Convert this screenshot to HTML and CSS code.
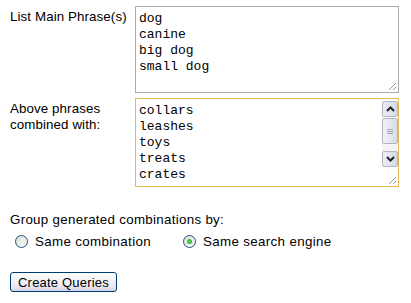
FILE: index.html
```html
<!DOCTYPE html>
<html lang="en">
<head>
    <meta charset="UTF-8">
    <title>Create Queries</title>
    <link rel="stylesheet" href="styles.css">
</head>
<body>
    <form class="query-form">
        <div class="phrase-grid">
            <label class="field-label">List Main Phrase(s)</label>
            <div class="text-box main-box">
                <div class="text-lines">
                    <div>dog</div>
                    <div>canine</div>
                    <div>big dog</div>
                    <div>small dog</div>
                </div>
                <svg class="grip" width="9" height="9" viewBox="0 0 9 9">
                    <path d="M8 1 L1 8 M8 5 L5 8" stroke="#9a9a9a" stroke-width="1"/>
                </svg>
            </div>

            <label class="field-label">Above phrases<br>combined with:</label>
            <div class="text-box combo-box focused">
                <div class="text-lines">
                    <div>collars</div>
                    <div>leashes</div>
                    <div>toys</div>
                    <div>treats</div>
                    <div>crates</div>
                </div>
                <div class="scrollbar">
                    <div class="scroll-btn">
                        <svg width="9" height="6" viewBox="0 0 9 6"><path d="M1 5 L4.5 1.5 L8 5" fill="none" stroke="#222" stroke-width="2"/></svg>
                    </div>
                    <div class="scroll-thumb">
                        <span></span><span></span><span></span>
                    </div>
                    <div class="scroll-track"></div>
                    <div class="scroll-btn">
                        <svg width="9" height="6" viewBox="0 0 9 6"><path d="M1 1 L4.5 4.5 L8 1" fill="none" stroke="#222" stroke-width="2"/></svg>
                    </div>
                </div>
                <svg class="grip" width="9" height="9" viewBox="0 0 9 9">
                    <path d="M8 1 L1 8 M8 5 L5 8" stroke="#9a9a9a" stroke-width="1"/>
                </svg>
            </div>
        </div>

        <div class="group-title">Group generated combinations by:</div>
        <div class="radio-row">
            <label class="radio-option">
                <span class="radio"></span>
                Same combination
            </label>
            <label class="radio-option">
                <span class="radio checked"></span>
                Same search engine
            </label>
        </div>

        <button type="button" class="create-button">Create Queries</button>
    </form>
</body>
</html>
```

FILE: styles.css
```css
* {
    margin: 0;
    padding: 0;
    box-sizing: border-box;
}

body {
    background-color: white;
    color: black;
    font-family: 'Liberation Sans', Arial, sans-serif;
    font-size: 13.33px;
    letter-spacing: 0.1px;
}

.query-form {
    padding: 6px 0 0 10px;
}

.phrase-grid {
    display: grid;
    grid-template-columns: 125px 264px;
    row-gap: 5px;
}

.field-label {
    line-height: 16px;
    padding-top: 3px;
}

.text-box {
    position: relative;
    border: 1px solid #a5acb2;
    background-color: white;
    font-family: 'Liberation Mono', 'Courier New', monospace;
    font-size: 13px;
    letter-spacing: 0;
    line-height: 16px;
    display: flex;
}

.main-box {
    height: 87px;
}

.combo-box {
    height: 89px;
}

.focused {
    border-color: #e5b95a;
}

.text-lines {
    flex: 1;
    padding: 4px 3px 0 3px;
}

.grip {
    position: absolute;
    right: 1px;
    bottom: 1px;
}

.scrollbar {
    width: 16px;
    margin: 2px 0 19px 0;
    display: flex;
    flex-direction: column;
}

.scroll-btn {
    height: 16px;
    border: 1px solid #b3b5c4;
    border-radius: 2px;
    background: linear-gradient(to right, #eceef6, #d6d8e6);
    display: flex;
    justify-content: center;
    align-items: center;
}

.scroll-thumb {
    height: 26px;
    margin-top: 1px;
    border: 1px solid #b3b5c4;
    border-radius: 2px;
    background: linear-gradient(to right, #f2f3f8, #d8dae7);
    display: flex;
    flex-direction: column;
    justify-content: center;
    align-items: center;
    gap: 1px;
}

.scroll-thumb span {
    width: 6px;
    height: 1px;
    background-color: #a0a3b6;
}

.scroll-track {
    flex: 1;
    background-color: #f4f4f6;
}

.group-title {
    margin-top: 25px;
    line-height: 15px;
    letter-spacing: 0.3px;
}

.radio-row {
    display: flex;
    margin-top: 7px;
    padding-left: 5px;
    line-height: 15px;
    letter-spacing: 0.35px;
}

.radio-option {
    display: flex;
    align-items: center;
    gap: 7px;
}

.radio-option + .radio-option {
    margin-left: 32px;
}

.radio {
    width: 13px;
    height: 13px;
    border: 1px solid #1c5180;
    border-radius: 50%;
    background: linear-gradient(135deg, #dcdcd5, #ffffff);
    display: flex;
    justify-content: center;
    align-items: center;
}

.radio.checked::after {
    content: "";
    width: 5px;
    height: 5px;
    border-radius: 50%;
    background: radial-gradient(circle, #5ed45e, #21a121);
}

.create-button {
    margin-top: 23px;
    width: 107px;
    height: 20px;
    border: 1px solid #003c74;
    border-radius: 3px;
    background: linear-gradient(#ffffff, #ecebf3 70%, #d6d0e5);
    font-family: 'Liberation Sans', Arial, sans-serif;
    font-size: 13px;
    letter-spacing: 0.2px;
    color: black;
}
```
